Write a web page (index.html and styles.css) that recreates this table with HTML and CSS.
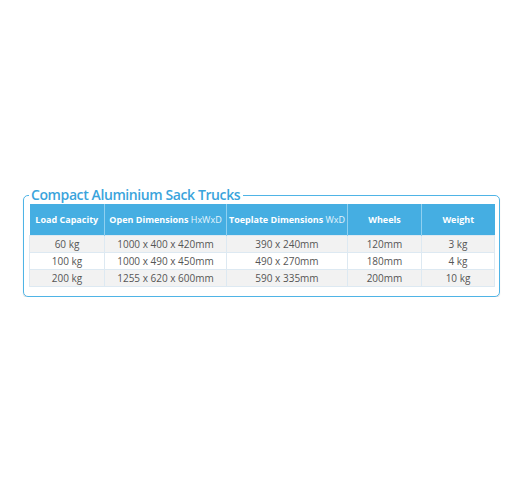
FILE: index.html
```html
<!DOCTYPE html>
<html lang="en">
<head>
<meta charset="utf-8">
<title>Compact Aluminium Sack Trucks</title>
<link rel="stylesheet" href="styles.css">
</head>
<body>
<div class="page">
  <fieldset class="spec-box">
    <legend class="spec-title">Compact Aluminium Sack Trucks</legend>
    <table class="spec-table">
      <colgroup>
        <col class="c1"><col class="c2"><col class="c3"><col class="c4"><col class="c5">
      </colgroup>
      <thead>
        <tr>
          <th>Load Capacity</th>
          <th>Open Dimensions <span class="unit">HxWxD</span></th>
          <th>Toeplate Dimensions <span class="unit">WxD</span></th>
          <th>Wheels</th>
          <th>Weight</th>
        </tr>
      </thead>
      <tbody>
        <tr class="alt">
          <td>60 kg</td><td>1000 x 400 x 420mm</td><td>390 x 240mm</td><td>120mm</td><td>3 kg</td>
        </tr>
        <tr>
          <td>100 kg</td><td>1000 x 490 x 450mm</td><td>490 x 270mm</td><td>180mm</td><td>4 kg</td>
        </tr>
        <tr class="alt">
          <td>200 kg</td><td>1255 x 620 x 600mm</td><td>590 x 335mm</td><td>200mm</td><td>10 kg</td>
        </tr>
      </tbody>
    </table>
  </fieldset>
</div>
</body>
</html>
```

FILE: styles.css
```css
html, body {
  margin: 0;
  padding: 0;
  background: #ffffff;
}

.page {
  padding-top: 186px;
  padding-left: 23px;
  font-family: "Open Sans", "Noto Sans", sans-serif;
}

.spec-box {
  box-sizing: border-box;
  width: 476px;
  margin: 0;
  padding: 0 4px 9px 5px;
  border: 1px solid #4fb4e6;
  border-radius: 5px;
  box-shadow: 0 1px 1px rgba(0, 0, 0, 0.18);
}

.spec-title {
  padding: 0 3px 0 2px;
  font-size: 14px;
  line-height: 18px;
  font-weight: 600;
  color: #3aa4dc;
  letter-spacing: -0.4px;
}

.spec-table {
  width: 465px;
  table-layout: fixed;
  border-collapse: collapse;
}

.c1 { width: 75px; }
.c2 { width: 122px; }
.c3 { width: 121px; }
.c4 { width: 74px; }
.c5 { width: 73px; }

.spec-table th {
  height: 31px;
  padding: 0;
  background: #45aee2;
  color: #ffffff;
  font-size: 9px;
  font-weight: 700;
  border-left: 1px solid #8fd0f0;
  white-space: nowrap;
}

.spec-table th:first-child {
  border-left: none;
}

.spec-table th .unit {
  font-weight: 400;
  color: #e6f5fd;
}

.spec-table td {
  height: 16px;
  padding: 0;
  text-align: center;
  font-size: 10px;
  line-height: 16px;
  color: #555555;
  border: 1px solid #dde9f2;
  white-space: nowrap;
}

.spec-table tr.alt td {
  background: #f2f2f2;
}
```
